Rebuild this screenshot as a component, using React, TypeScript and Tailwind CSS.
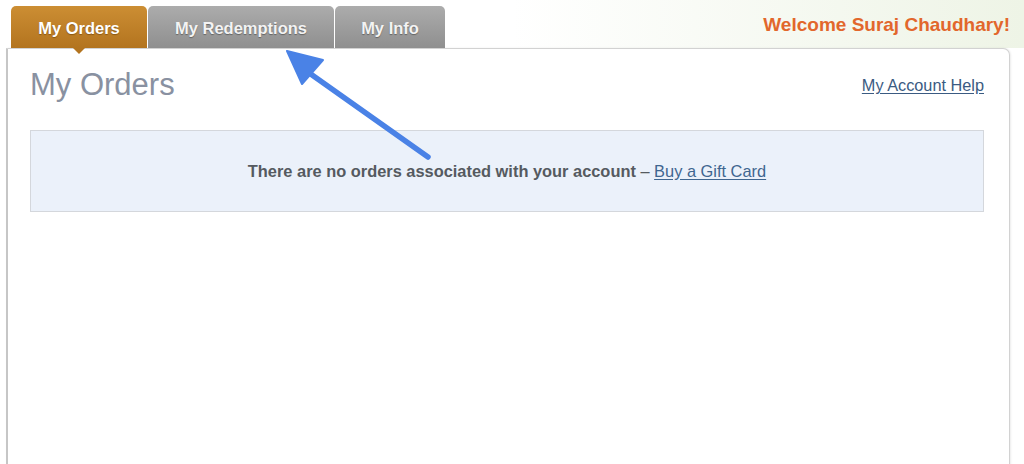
import React from 'react';

const tabs = [
  { label: 'My Orders', width: 'w-[136px]', active: true },
  { label: 'My Redemptions', width: 'w-[186px]', active: false },
  { label: 'My Info', width: 'w-[110px]', active: false },
];

function Arrow() {
  return (
    <svg
      className="absolute left-0 top-0 pointer-events-none"
      width="1024"
      height="464"
      viewBox="0 0 1024 464"
    >
      <line x1="428" y1="157" x2="305" y2="70" stroke="#4a82e6" strokeWidth="5.5" strokeLinecap="round" />
      <polygon points="287,51 323,60 302,84" fill="#4a82e6" stroke="#4a82e6" strokeWidth="2" strokeLinejoin="round" />
    </svg>
  );
}

export default function App() {
  return (
    <div className="relative w-[1024px] h-[464px] overflow-hidden bg-white font-['Liberation_Sans',Arial,sans-serif]">
      {/* header: tabs + welcome */}
      <div className="flex items-end justify-between h-[48px] pl-[11px] pr-[14px] bg-gradient-to-r from-white via-white to-[#eef4e6]">
        <div className="flex items-end gap-[1px]">
          {tabs.map((t) => (
            <div
              key={t.label}
              className={
                t.active
                  ? `relative ${t.width} h-[42px] pt-[2px] rounded-t-[5px] flex items-center justify-center text-[16.5px] font-bold text-white bg-gradient-to-b from-[#cc8e33] to-[#b3741f] [text-shadow:0_1px_1px_rgba(90,50,0,0.5)]`
                  : `${t.width} h-[42px] pt-[2px] rounded-t-[5px] flex items-center justify-center text-[16.5px] font-bold text-[#f3f3f3] bg-gradient-to-b from-[#acacac] to-[#8f8f8f] [text-shadow:0_1px_1px_rgba(0,0,0,0.35)]`
              }
            >
              {t.label}
              {t.active && (
                <span className="absolute left-1/2 -translate-x-1/2 top-full w-0 h-0 border-l-[6px] border-r-[6px] border-t-[6px] border-l-transparent border-r-transparent border-t-[#b3741f] z-10" />
              )}
            </div>
          ))}
        </div>
        <div className="self-start pt-[15px] text-[19px] font-bold text-[#e2672c] leading-none">
          Welcome Suraj Chaudhary!
        </div>
      </div>

      {/* panel */}
      <div className="ml-[6px] mr-[14px] h-[440px] border border-[#d2d2d2] border-l-[2px] border-l-[#c6c6c6] rounded-tr-[7px] bg-white pl-[22px] pr-[25px] pt-[18px] shadow-[1px_0_2px_rgba(0,0,0,0.08)]">
        <div className="flex justify-between items-start">
          <h1 className="text-[31px] leading-[36px] font-light text-[#8991a1]">My Orders</h1>
          <a href="#" className="mt-[6px] text-[16.3px] text-[#3b5b82] underline underline-offset-2">
            My Account Help
          </a>
        </div>
        <div className="mt-[27px] h-[82px] border border-[#d4d7dc] bg-[#ebf1fa] flex items-center justify-center text-[16.4px]">
          <span className="font-bold text-[#555a60]">There are no orders associated with your account&nbsp;</span>
          <span className="text-[#555a60]">–&nbsp;</span>
          <a href="#" className="text-[#3f6690] underline underline-offset-2">Buy a Gift Card</a>
        </div>
      </div>

      <Arrow />
    </div>
  );
}
